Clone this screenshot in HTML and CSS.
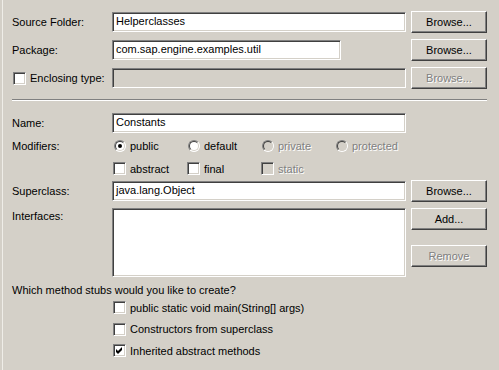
FILE: index.html
```html
<!DOCTYPE html>
<html>
<head>
<meta charset="utf-8">
<link rel="stylesheet" href="styles.css">
</head>
<body>
<div class="dialog">
  <div class="row">
    <div class="label">Source Folder:</div>
    <div class="cell"><div class="field">Helperclasses</div></div>
    <div class="btn">Browse...</div>
  </div>
  <div class="row gap">
    <div class="label">Package:</div>
    <div class="cell"><div class="field field-pkg">com.sap.engine.examples.util</div></div>
    <div class="btn">Browse...</div>
  </div>
  <div class="row gap">
    <div class="label label-check"><span class="check"></span><span>Enclosing type:</span></div>
    <div class="cell"><div class="field field-disabled"></div></div>
    <div class="btn btn-disabled"><span class="dis">Browse...</span></div>
  </div>

  <div class="separator"></div>

  <div class="row row-name">
    <div class="label">Name:</div>
    <div class="cell"><div class="field">Constants</div></div>
    <div></div>
  </div>
  <div class="row row-mod">
    <div class="label">Modifiers:</div>
    <div class="opts">
      <div class="opt"><span class="slot"><span class="radio on"></span></span><span>public</span></div>
      <div class="opt"><span class="slot"><span class="radio"></span></span><span>default</span></div>
      <div class="opt"><span class="slot"><span class="radio off"></span></span><span class="dis">private</span></div>
      <div class="opt"><span class="slot"><span class="radio off"></span></span><span class="dis">protected</span></div>
    </div>
    <div></div>
  </div>
  <div class="row row-mod">
    <div class="label"></div>
    <div class="opts">
      <div class="opt"><span class="slot"><span class="check"></span></span><span>abstract</span></div>
      <div class="opt"><span class="slot"><span class="check"></span></span><span>final</span></div>
      <div class="opt"><span class="slot"><span class="check off"></span></span><span class="dis">static</span></div>
      <div></div>
    </div>
    <div></div>
  </div>
  <div class="row">
    <div class="label">Superclass:</div>
    <div class="cell"><div class="field">java.lang.Object</div></div>
    <div class="btn">Browse...</div>
  </div>
  <div class="row row-intf gap">
    <div class="label label-top">Interfaces:</div>
    <div class="list"></div>
    <div class="btn-col">
      <div class="btn">Add...</div>
      <div class="btn btn-disabled btn-remove"><span class="dis">Remove</span></div>
    </div>
  </div>

  <div class="question">Which method stubs would you like to create?</div>
  <div class="stubs">
    <div class="opt stub"><span class="slot"><span class="check"></span></span><span>public static void main(String[] args)</span></div>
    <div class="opt stub"><span class="slot"><span class="check"></span></span><span>Constructors from superclass</span></div>
    <div class="opt stub"><span class="slot"><span class="check"><svg width="13" height="13" viewBox="0 0 13 13" class="mark"><path d="M3 5 L5 7 L9 3 L9 6 L5 10 L3 8 Z" fill="#000"/></svg></span></span><span>Inherited abstract methods</span></div>
  </div>
</div>
</body>
</html>
```

FILE: styles.css
```css
html, body {
  margin: 0;
  padding: 0;
}
body {
  font-family: "Liberation Sans", Arial, sans-serif;
  font-size: 11px;
  color: #000;
  background: #d4d0c8;
}
.dialog {
  width: 499px;
  height: 370px;
  box-sizing: border-box;
  padding: 11px 12px 0 12px;
  background: #d4d0c8;
  box-shadow: inset 2px 0 0 #d4d0c8, inset 3px 0 0 #efede8;
  overflow: hidden;
}
.row {
  display: grid;
  grid-template-columns: 100px 299px 76px;
  height: 22px;
  align-items: center;
}
.row.gap {
  margin-top: 6px;
}
.label {
  white-space: nowrap;
}
.label-check {
  display: flex;
  align-items: center;
  gap: 4px;
  padding-left: 1px;
}
.label-top {
  align-self: start;
  padding-top: 2px;
}
.cell {
  display: flex;
  align-items: center;
}
.field {
  box-sizing: border-box;
  width: 294px;
  height: 20px;
  line-height: 16px;
  padding-left: 3px;
  background: #fff;
  border: 1px solid;
  border-color: #808080 #fff #fff #808080;
  box-shadow: inset 1px 1px 0 #404040, inset -1px -1px 0 #d4d0c8;
  white-space: nowrap;
  overflow: hidden;
}
.field-pkg {
  width: 229px;
}
.field-disabled {
  background: #d4d0c8;
}
.btn {
  box-sizing: border-box;
  width: 76px;
  height: 22px;
  line-height: 20px;
  text-align: center;
  background: #d4d0c8;
  border: 1px solid;
  border-color: #fff #404040 #404040 #fff;
  box-shadow: inset -1px -1px 0 #808080, inset 1px 1px 0 #d4d0c8;
}
.dis {
  color: #808080;
  text-shadow: 1px 1px 0 #fff;
}
.separator {
  margin-top: 10px;
  height: 0;
  border-top: 1px solid #808080;
  border-bottom: 1px solid #fff;
}
.row-name {
  margin-top: 11px;
}
.row-mod {
  height: 23px;
}
.opts {
  display: grid;
  grid-template-columns: repeat(4, 74px);
  align-items: center;
  padding-left: 1px;
}
.opt {
  display: flex;
  align-items: center;
  gap: 4px;
  white-space: nowrap;
}
.slot {
  width: 13px;
  height: 13px;
  display: flex;
  align-items: center;
}
.check {
  box-sizing: border-box;
  width: 13px;
  height: 13px;
  flex: none;
  position: relative;
  background: #fff;
  border: 1px solid;
  border-color: #808080 #fff #fff #808080;
  box-shadow: inset 1px 1px 0 #404040, inset -1px -1px 0 #d4d0c8;
}
.check.off {
  background: #d4d0c8;
}
.mark {
  position: absolute;
  left: -1px;
  top: -1px;
}
.radio {
  box-sizing: border-box;
  width: 12px;
  height: 12px;
  margin-left: 1px;
  border-radius: 50%;
  position: relative;
  background: #fff;
  border: 1px solid;
  border-color: #808080 #fff #fff #808080;
}
.radio::before {
  content: "";
  position: absolute;
  inset: 0;
  border-radius: 50%;
  border: 1px solid;
  border-color: #404040 #d4d0c8 #d4d0c8 #404040;
}
.radio.off {
  background: #d4d0c8;
}
.radio.on::after {
  content: "";
  position: absolute;
  left: 3px;
  top: 3px;
  width: 4px;
  height: 4px;
  border-radius: 50%;
  background: #000;
}
.row-intf {
  height: 69px;
  align-items: start;
}
.list {
  box-sizing: border-box;
  width: 294px;
  height: 69px;
  background: #fff;
  border: 1px solid;
  border-color: #808080 #fff #fff #808080;
  box-shadow: inset 1px 1px 0 #404040, inset -1px -1px 0 #d4d0c8;
}
.btn-col {
  display: flex;
  flex-direction: column;
}
.btn-remove {
  margin-top: 15px;
}
.question {
  margin-top: 6px;
  height: 14px;
  line-height: 14px;
  white-space: nowrap;
}
.stubs {
  padding-left: 101px;
  display: flex;
  flex-direction: column;
}
.stub {
  height: 21.5px;
}
```
